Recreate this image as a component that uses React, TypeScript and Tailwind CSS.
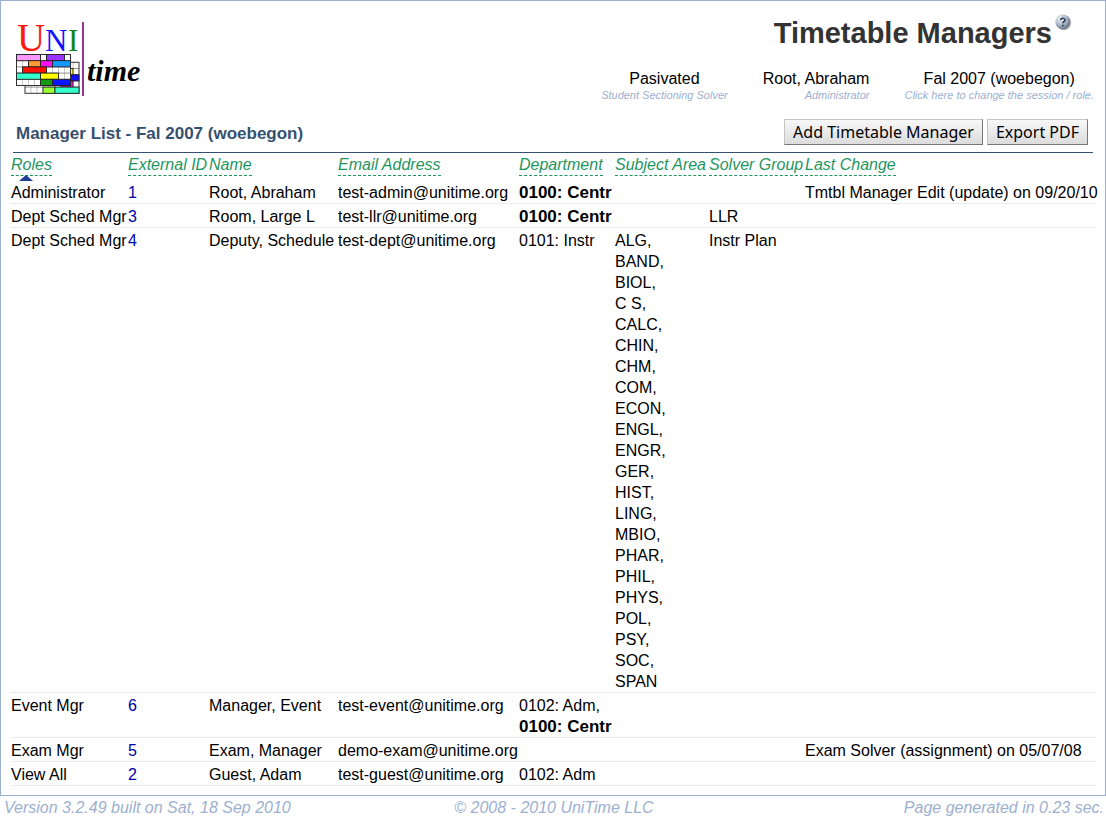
import React from "react";

type Dept = { name: string; primary?: boolean };
type Manager = {
  role: string;
  id: string;
  name: string;
  email: string;
  departments: Dept[];
  subjects?: string[];
  solver?: string;
  change?: string;
};

const managers: Manager[] = [
  {
    role: "Administrator",
    id: "1",
    name: "Root, Abraham",
    email: "test-admin@unitime.org",
    departments: [{ name: "0100: Centr", primary: true }],
    change: "Tmtbl Manager Edit (update) on 09/20/10",
  },
  {
    role: "Dept Sched Mgr",
    id: "3",
    name: "Room, Large L",
    email: "test-llr@unitime.org",
    departments: [{ name: "0100: Centr", primary: true }],
    solver: "LLR",
  },
  {
    role: "Dept Sched Mgr",
    id: "4",
    name: "Deputy, Schedule",
    email: "test-dept@unitime.org",
    departments: [{ name: "0101: Instr" }],
    subjects: [
      "ALG", "BAND", "BIOL", "C S", "CALC", "CHIN", "CHM", "COM", "ECON", "ENGL", "ENGR",
      "GER", "HIST", "LING", "MBIO", "PHAR", "PHIL", "PHYS", "POL", "PSY", "SOC", "SPAN",
    ],
    solver: "Instr Plan",
  },
  {
    role: "Event Mgr",
    id: "6",
    name: "Manager, Event",
    email: "test-event@unitime.org",
    departments: [{ name: "0102: Adm" }, { name: "0100: Centr", primary: true }],
  },
  {
    role: "Exam Mgr",
    id: "5",
    name: "Exam, Manager",
    email: "demo-exam@unitime.org",
    departments: [],
    change: "Exam Solver (assignment) on 05/07/08",
  },
  {
    role: "View All",
    id: "2",
    name: "Guest, Adam",
    email: "test-guest@unitime.org",
    departments: [{ name: "0102: Adm" }],
  },
];

const columns = [
  { label: "Roles", width: "w-[117px]", sorted: true },
  { label: "External ID", width: "w-[81px]" },
  { label: "Name", width: "w-[129px]" },
  { label: "Email Address", width: "w-[181px]" },
  { label: "Department", width: "w-[96px]" },
  { label: "Subject Area", width: "w-[94px]" },
  { label: "Solver Group", width: "w-[96px]" },
  { label: "Last Change", width: "" },
];

function GridLines({ x, y }: { x: number; y: number }) {
  return (
    <>
      <rect x={x} y={y} width={54} height={31} fill="#fff" />
      {[1, 2, 3, 4, 5, 6, 7, 8].map((i) => (
        <line key={"c" + i} x1={x + i * 6} x2={x + i * 6} y1={y} y2={y + 31} stroke="#bbb" strokeWidth="0.8" />
      ))}
      {[1, 2, 3, 4].map((i) => (
        <line key={"r" + i} x1={x} x2={x + 54} y1={y + i * 6.2} y2={y + i * 6.2} stroke="#777" strokeWidth="0.8" />
      ))}
      <rect x={x} y={y} width={54} height={31} fill="none" stroke="#333" strokeWidth="1" />
    </>
  );
}

// Each block: start column, row, columns spanned, fill
const backBlocks: [number, number, number, string][] = [
  [6, 1, 2, "#ffff00"],
  [6, 2, 3, "#1010ff"],
  [6, 3, 2, "#ff10e0"],
  [3, 4, 2, "#99ff33"],
  [5, 4, 4, "#33ffcc"],
];
const frontBlocks: [number, number, number, string][] = [
  [0, 0, 4, "#ff99ff"],
  [5, 0, 3, "#9933ff"],
  [2, 1, 2, "#ff9933"],
  [4, 1, 2, "#ff10f0"],
  [6, 1, 3, "#1199ff"],
  [1, 2, 4, "#ff1100"],
  [0, 3, 4, "#33ffcc"],
  [4, 3, 3, "#ffff00"],
  [4, 4, 2, "#119911"],
  [6, 4, 3, "#0a14ff"],
];

function Blocks({ x, y, items }: { x: number; y: number; items: [number, number, number, string][] }) {
  return (
    <>
      {items.map(([c, r, n, fill], i) => (
        <rect key={i} x={x + c * 6} y={y + r * 6.2} width={n * 6} height={6.2} fill={fill} stroke="#222" strokeWidth="0.9" />
      ))}
    </>
  );
}

function Logo() {
  return (
    <svg width="130" height="85" viewBox="14 13 130 85" overflow="visible" role="img" aria-label="UniTime">
      <g fontFamily="'Liberation Serif', serif">
        <text x="17" y="51" fontSize="39" fill="#ff1a0a">U</text>
        <text x="45" y="51" fontSize="31" fill="#1414ff">N</text>
        <text x="68" y="51" fontSize="31" fill="#118811">I</text>
      </g>
      <GridLines x={25} y={62.3} />
      <Blocks x={25} y={62.3} items={backBlocks} />
      <GridLines x={16.5} y={54.5} />
      <Blocks x={16.5} y={54.5} items={frontBlocks} />
      <rect x="82" y="22" width="2" height="74" fill="#993399" />
      <text x="87" y="81" fontSize="30" fontStyle="italic" fontWeight="bold" fontFamily="'Liberation Serif', serif" fill="#000">
        time
      </text>
    </svg>
  );
}

function HelpIcon() {
  return (
    <svg width="18" height="18" viewBox="0 0 18 18" aria-hidden="true">
      <defs>
        <radialGradient id="orb" cx="0.35" cy="0.3" r="0.75">
          <stop offset="0" stopColor="#f2f6fa" />
          <stop offset="0.55" stopColor="#a9b8c8" />
          <stop offset="1" stopColor="#5d6b7c" />
        </radialGradient>
      </defs>
      <circle cx="9.8" cy="9.8" r="7.4" fill="#000" opacity="0.3" />
      <circle cx="8.8" cy="8.8" r="7.4" fill="url(#orb)" />
      <path d="M6.6 7.2C6.7 4.7 11 4.7 11 7.1C11 8.7 8.9 8.6 8.8 10.2" fill="none" stroke="#27374f" strokeWidth="1.5" />
      <circle cx="8.8" cy="12.4" r="0.9" fill="#27374f" />
    </svg>
  );
}

function Info({ title, note, align }: { title: string; note: string; align: string }) {
  return (
    <a href="#" className={"block " + align}>
      <div className="text-[16px] leading-[18px]">{title}</div>
      <div className="text-[11px] leading-[14px] italic text-[#9cb0d0]">{note}</div>
    </a>
  );
}

function Action({ children }: { children: React.ReactNode }) {
  return (
    <button
      type="button"
      className="h-[26px] whitespace-nowrap border border-t-[#c4c4c4] border-l-[#c4c4c4] border-r-[#777] border-b-[#777] bg-linear-to-b from-[#f8f8f8] to-[#dcdcdc] px-[8px] font-['Noto_Sans',sans-serif] text-[16px] leading-[24px]"
    >
      {children}
    </button>
  );
}

export default function App() {
  return (
    <div className="bg-white font-['Liberation_Sans',Arial,sans-serif] text-[16px] leading-[21px] text-black">
      <div className="border border-[#9cb0d0] px-[9px] pb-[9px]">
        <header className="flex justify-between pt-[12px] pl-[4px]">
          <Logo />
          <div className="flex flex-col">
            <div className="flex justify-end pr-[24px]">
              <h1 className="pt-[2px] text-[29px] leading-[36px] font-bold text-[#333]">Timetable Managers</h1>
              <a href="#" aria-label="Help" className="ml-[2px]">
                <HelpIcon />
              </a>
            </div>
            <div className="mt-[19px] flex justify-end gap-[35px] pr-[2px]">
              <Info title="Pasivated" note="Student Sectioning Solver" align="text-center" />
              <Info title="Root, Abraham" note="Administrator" align="text-right" />
              <Info title="Fal 2007 (woebegon)" note="Click here to change the session / role." align="text-center" />
            </div>
          </div>
        </header>

        <main>
          <div className="mx-[3px] mt-[17px] flex items-center justify-between border-b border-[#36506f] pr-[5px] pb-[7px] pl-[3px]">
            <h2 className="pt-[2px] text-[17px] font-bold text-[#36506f]">Manager List - Fal 2007 (woebegon)</h2>
            <div className="flex gap-[4px]">
              <Action>Add Timetable Manager</Action>
              <Action>Export PDF</Action>
            </div>
          </div>

          <table className="w-full table-fixed border-collapse">
            <thead>
              <tr>
                {columns.map((c) => (
                  <th
                    key={c.label}
                    className={"h-[27px] p-0 pt-[2px] pl-px text-left align-top leading-[20px] font-normal whitespace-nowrap italic text-[#1f9660] " + c.width}
                  >
                    <a href="#" className="relative inline-block border-b border-dashed border-[#1f9660]">
                      {c.label}
                      {c.sorted && (
                        <svg className="absolute top-full left-[8px]" width="14" height="6" viewBox="0 0 14 6" aria-hidden="true">
                          <path d="M7 0L14 6H0Z" fill="#1c3f94" />
                        </svg>
                      )}
                    </a>
                  </th>
                ))}
              </tr>
            </thead>
            <tbody>
              {managers.map((m) => (
                <tr key={m.id} className="border-b border-[#ececec] align-top whitespace-nowrap">
                  <td className="pt-[2px] pl-px">{m.role}</td>
                  <td className="pt-[2px] pl-px">
                    <a href="#" className="text-[#0000a8]">{m.id}</a>
                  </td>
                  <td className="pt-[2px] pl-px">{m.name}</td>
                  <td className="pt-[2px] pl-px">{m.email}</td>
                  <td className="pt-[2px] pl-px">
                    {m.departments.map((d, i) => (
                      <div key={d.name} className={d.primary ? "text-[17px] font-bold" : ""}>
                        {d.name}
                        {i < m.departments.length - 1 ? "," : ""}
                      </div>
                    ))}
                  </td>
                  <td className="pt-[2px] pl-px">
                    {m.subjects?.map((s, i, all) => (
                      <div key={s}>
                        {s}
                        {i < all.length - 1 ? "," : ""}
                      </div>
                    ))}
                  </td>
                  <td className="pt-[2px] pl-px">{m.solver}</td>
                  <td className="pt-[2px] pl-px">{m.change}</td>
                </tr>
              ))}
            </tbody>
          </table>
        </main>
      </div>
      <footer className="grid grid-cols-3 pt-px pr-[2px] pl-[4px] italic text-[#9cb0d0]">
        <span>Version 3.2.49 built on Sat, 18 Sep 2010</span>
        <span className="text-center">© 2008 - 2010 UniTime LLC</span>
        <span className="text-right">Page generated in 0.23 sec.</span>
      </footer>
    </div>
  );
}
